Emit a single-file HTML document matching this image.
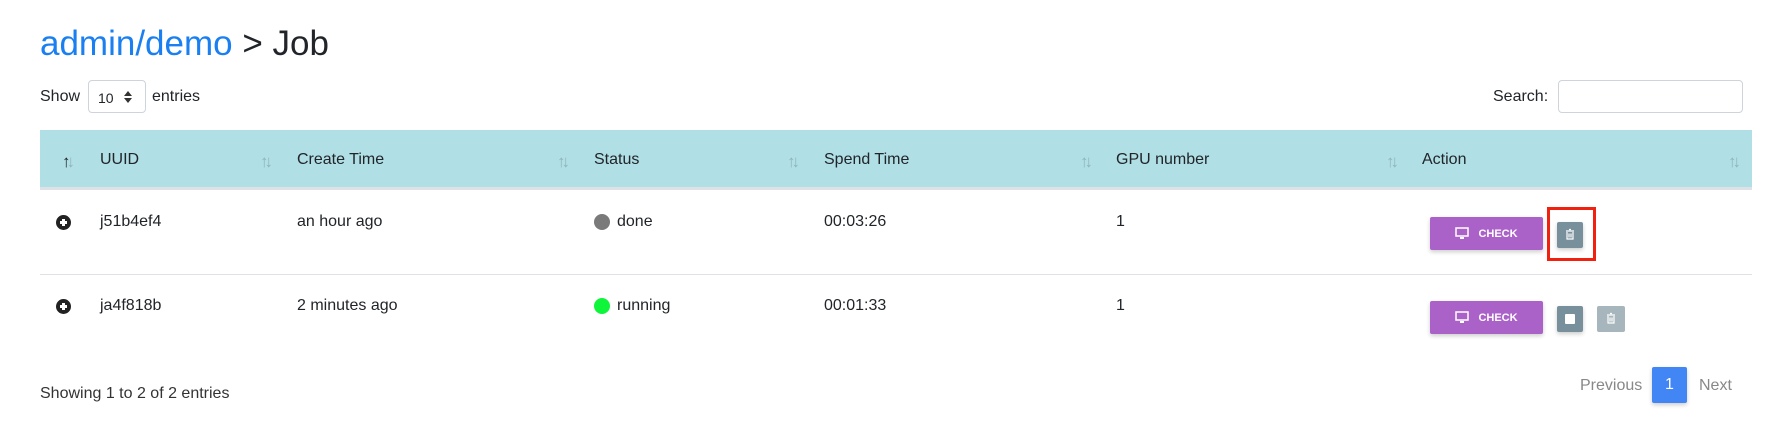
<!DOCTYPE html>
<html><head><meta charset="utf-8"><style>
*{box-sizing:border-box;margin:0;padding:0}
body{width:1790px;height:448px;background:#fff;font-family:"Liberation Sans",sans-serif;color:#212529;position:relative;overflow:hidden;font-size:16px}
.a{position:absolute;white-space:nowrap}
.t{transform:translateY(-50%)}
.sort{position:absolute;color:#8fb5bb;font-size:17px;letter-spacing:-4px;transform:translateY(-50%)}
.btn{position:absolute;border-radius:2px;box-shadow:0 2px 4px rgba(0,0,0,.2)}
.chk{background:#ab62c8;color:#fff;font-size:11px;font-weight:bold;display:flex;align-items:center;justify-content:center;gap:9px}
</style></head><body>
<div class="a" style="left:40px;top:24px;font-size:35px;color:#212529"><span style="color:#1a7ff0">admin/demo</span> &gt; Job</div>

<div class="a t" style="left:40px;top:97px">Show</div>
<div class="a" style="left:88px;top:80px;width:58px;height:33px;border:1px solid #ced4da;border-radius:4px;font-size:14px;padding:9px 0 0 9px">10</div>
<svg class="a" style="left:124px;top:91px" width="8" height="12" viewBox="0 0 8 12"><path d="M4 0L8 5H0z M4 12L8 7H0z" fill="#333"/></svg>
<div class="a t" style="left:152px;top:97px">entries</div>
<div class="a t" style="left:1493px;top:97px">Search:</div>
<div class="a" style="left:1558px;top:80px;width:185px;height:33px;border:1px solid #ced4da;border-radius:4px"></div>

<div class="a" style="left:40px;top:130px;width:1712px;height:57px;background:#b0dfe5"></div>
<div class="a" style="left:40px;top:187px;width:1712px;height:3px;background:#dee2e6"></div>
<div class="sort" style="left:62px;top:162px;color:#222">↑<span style="color:#8fb5bb">↓</span></div>
<div class="a t" style="left:100px;top:160px">UUID</div>
<div class="sort" style="left:260px;top:162px">↑↓</div>
<div class="a t" style="left:297px;top:160px">Create Time</div>
<div class="sort" style="left:557px;top:162px">↑↓</div>
<div class="a t" style="left:594px;top:160px">Status</div>
<div class="sort" style="left:787px;top:162px">↑↓</div>
<div class="a t" style="left:824px;top:160px">Spend Time</div>
<div class="sort" style="left:1080px;top:162px">↑↓</div>
<div class="a t" style="left:1116px;top:160px">GPU number</div>
<div class="sort" style="left:1386px;top:162px">↑↓</div>
<div class="a t" style="left:1422px;top:160px">Action</div>
<div class="sort" style="left:1728px;top:162px">↑↓</div>

<!-- row1 -->
<div class="a" style="left:56px;top:215px;width:15px;height:15px;border-radius:50%;background:#222"></div>
<div class="a" style="left:60px;top:221px;width:7px;height:2.5px;background:#fff"></div>
<div class="a" style="left:62.3px;top:218.5px;width:2.5px;height:7px;background:#fff"></div>
<div class="a t" style="left:100px;top:222px">j51b4ef4</div>
<div class="a t" style="left:297px;top:222px">an hour ago</div>
<div class="a" style="left:594px;top:214px;width:16px;height:16px;border-radius:50%;background:#7a7a7a"></div>
<div class="a t" style="left:617px;top:222px">done</div>
<div class="a t" style="left:824px;top:222px">00:03:26</div>
<div class="a t" style="left:1116px;top:222px">1</div>
<div class="btn chk" style="left:1430px;top:217px;width:113px;height:33px"><svg width="14" height="13" viewBox="0 0 14 13"><rect x="1" y="1" width="12" height="8" fill="none" stroke="#fff" stroke-width="1.5"/><rect x="5" y="10" width="4" height="2" fill="#fff"/></svg>CHECK</div>
<div class="btn" style="left:1557px;top:222px;width:26px;height:26px;background:#78909c"><svg width="26" height="26" viewBox="0 0 26 26"><path d="M9 9h8M12 7.5h2M10 10v7h6v-7M12 11.5v4M14 11.5v4" fill="none" stroke="#fff" stroke-width="1.2"/></svg></div>
<div class="a" style="left:1547px;top:207px;width:49px;height:54px;border:3px solid #f0220f"></div>

<div class="a" style="left:40px;top:274px;width:1712px;height:1px;background:#dee2e6"></div>

<!-- row2 -->
<div class="a" style="left:56px;top:299px;width:15px;height:15px;border-radius:50%;background:#222"></div>
<div class="a" style="left:60px;top:305.3px;width:7px;height:2.5px;background:#fff"></div>
<div class="a" style="left:62.3px;top:302.8px;width:2.5px;height:7px;background:#fff"></div>
<div class="a t" style="left:100px;top:306px">ja4f818b</div>
<div class="a t" style="left:297px;top:306px">2 minutes ago</div>
<div class="a" style="left:594px;top:298px;width:16px;height:16px;border-radius:50%;background:#0ef53a"></div>
<div class="a t" style="left:617px;top:306px">running</div>
<div class="a t" style="left:824px;top:306px">00:01:33</div>
<div class="a t" style="left:1116px;top:306px">1</div>
<div class="btn chk" style="left:1430px;top:301px;width:113px;height:33px"><svg width="14" height="13" viewBox="0 0 14 13"><rect x="1" y="1" width="12" height="8" fill="none" stroke="#fff" stroke-width="1.5"/><rect x="5" y="10" width="4" height="2" fill="#fff"/></svg>CHECK</div>
<div class="btn" style="left:1557px;top:306px;width:26px;height:26px;background:#78909c"><div style="position:absolute;left:8px;top:8px;width:10px;height:10px;background:#fff;border-radius:1px"></div></div>
<div class="btn" style="left:1597px;top:306px;width:28px;height:26px;background:#a7b6bd;box-shadow:none"><svg width="28" height="26" viewBox="0 0 28 26"><path d="M10 9h8M13 7.5h2M11 10v7h6v-7M13 11.5v4M15 11.5v4" fill="none" stroke="#fff" stroke-width="1.2"/></svg></div>

<div class="a t" style="left:40px;top:394px;color:#333">Showing 1 to 2 of 2 entries</div>
<div class="a t" style="left:1580px;top:386px;color:#888">Previous</div>
<div class="btn" style="left:1652px;top:367px;width:35px;height:36px;background:#4285f4;color:#fff;text-align:center;line-height:36px">1</div>
<div class="a t" style="left:1699px;top:386px;color:#888">Next</div>
</body></html>
